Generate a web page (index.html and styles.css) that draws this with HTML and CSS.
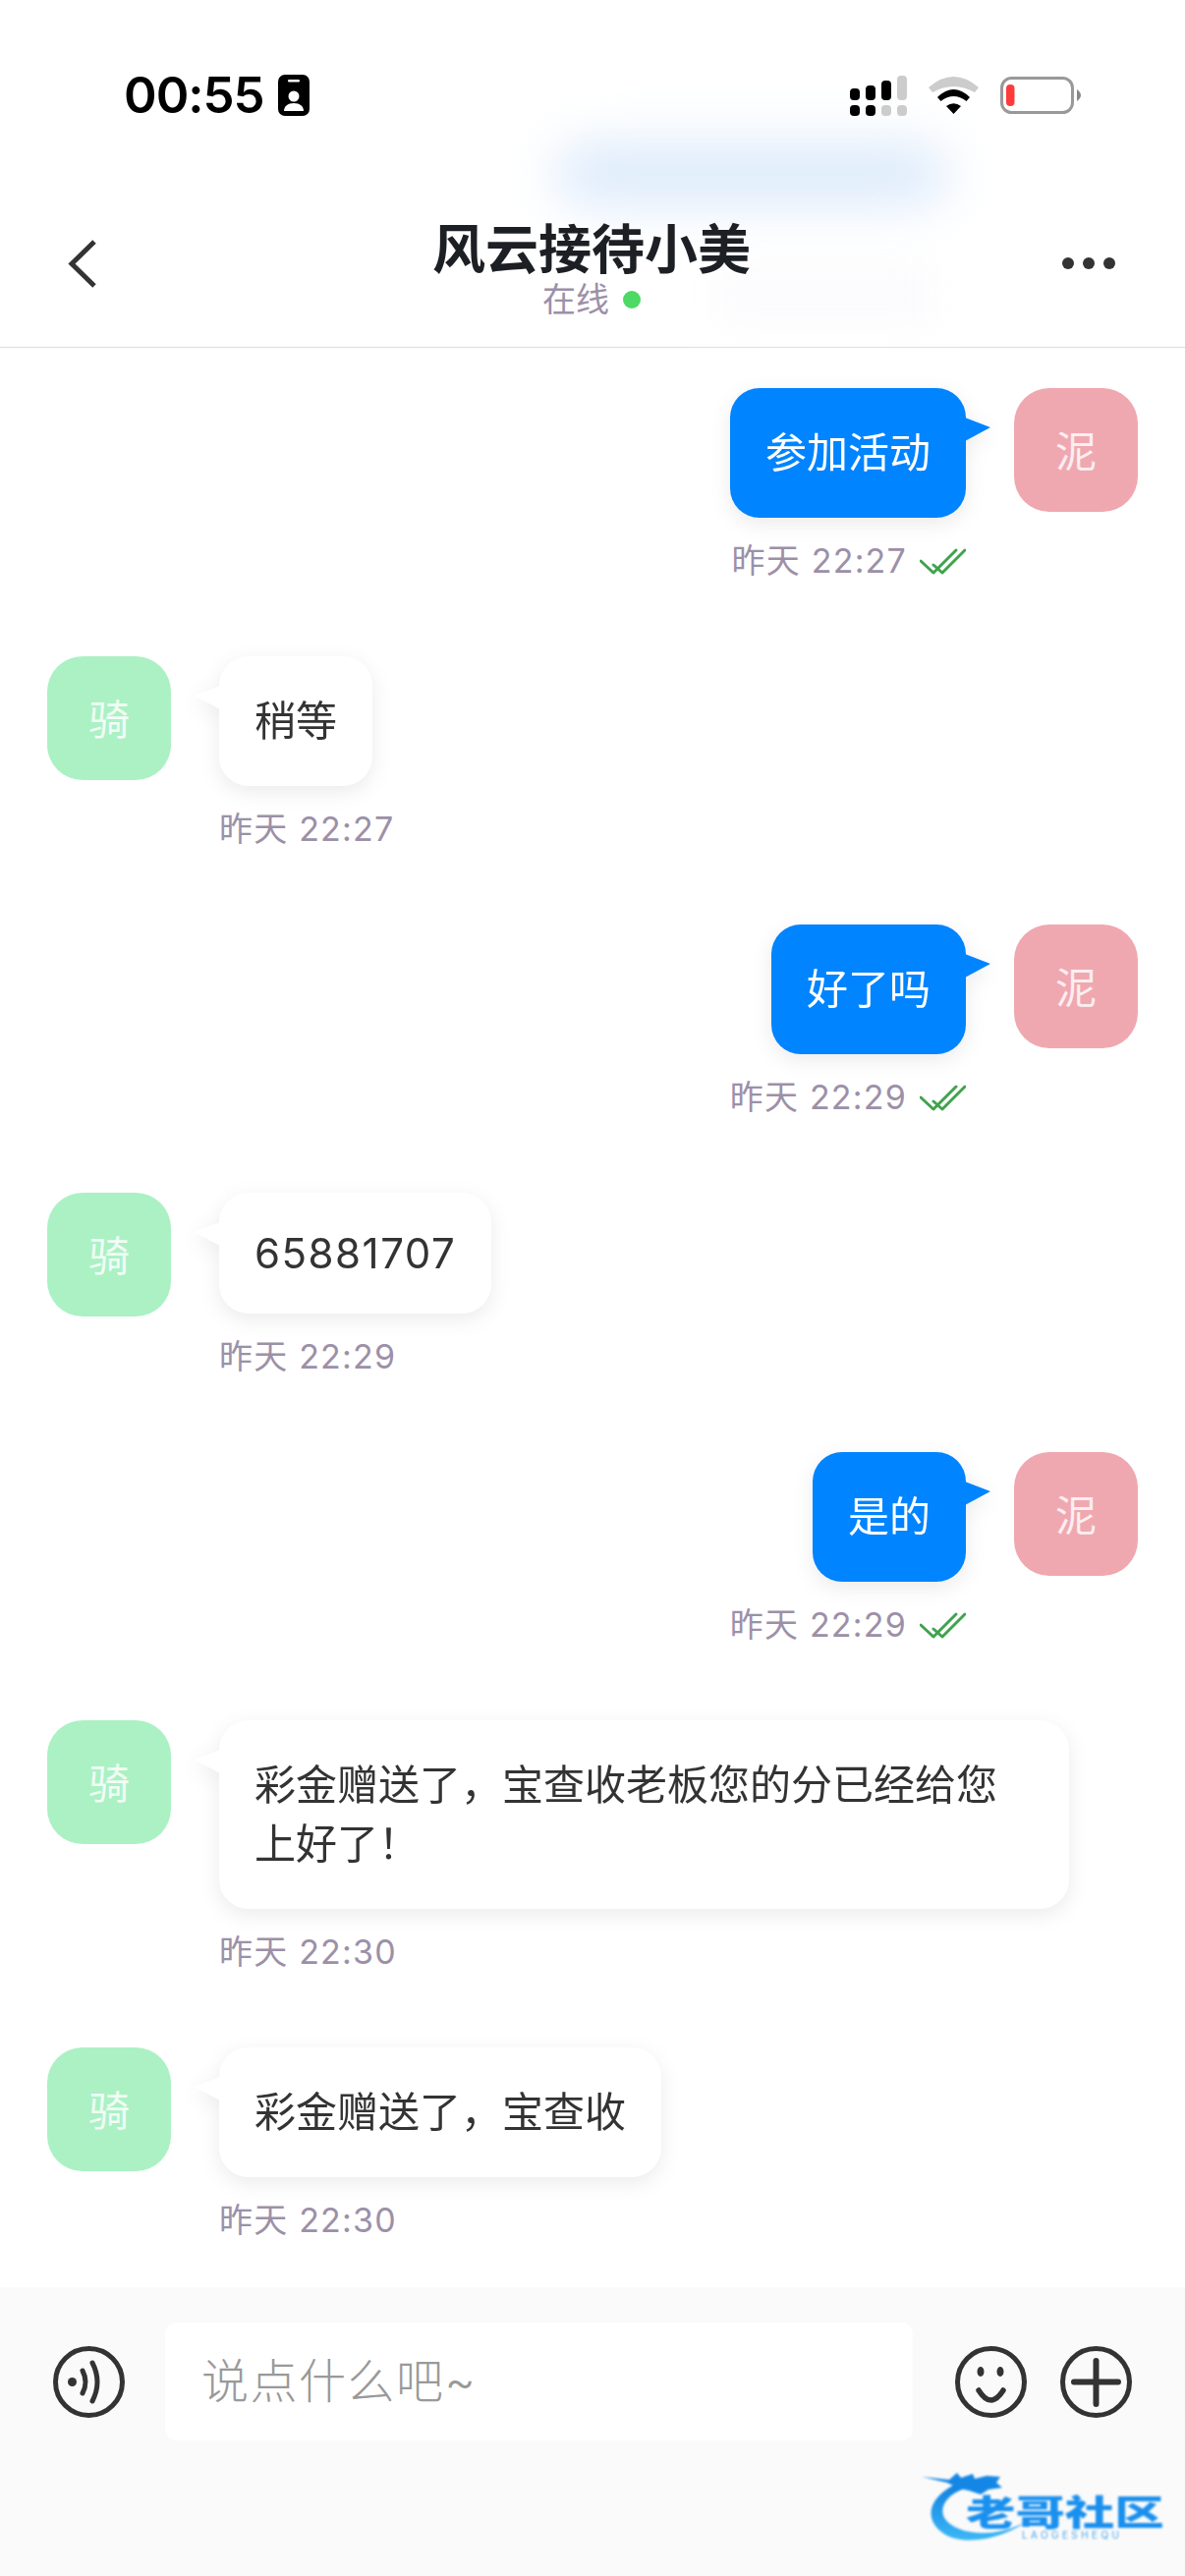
FILE: index.html
```html
<!DOCTYPE html>
<html lang="zh-CN">
<head>
  <meta charset="UTF-8" />
  <title>风云接待小美</title>
  <link rel="stylesheet" href="styles.css">
</head>
<body>
  <div class="phone">
    <header class="top">
      <div class="blob"></div>
      <div class="blob-faint"></div>

      <div class="status-bar">
        <div class="status-left">
          <span class="clock">00:55</span>
          <svg class="badge" width="32" height="42" viewBox="0 0 32 42">
            <rect width="32" height="42" rx="7" fill="#000"/>
            <rect x="10" y="5" width="12" height="2.5" rx="1.2" fill="#fff"/>
            <circle cx="16" cy="22" r="5.5" fill="#fff"/>
            <path d="M6 37c0-5 4-8 10-8s10 3 10 8z" fill="#fff"/>
          </svg>
        </div>
        <div class="status-right">
          <svg width="58" height="41" viewBox="0 0 58 41">
            <rect x="0" y="13" width="10" height="12" rx="4"/>
            <rect x="16" y="10" width="10" height="15" rx="4"/>
            <rect x="32" y="5" width="10" height="20" rx="4"/>
            <rect x="48" y="0" width="10" height="25" rx="4" fill="#ccc"/>
            <rect x="0" y="30" width="10" height="11" rx="4"/>
            <rect x="16" y="30" width="10" height="11" rx="4"/>
            <rect x="32" y="30" width="10" height="11" rx="4" fill="#ccc"/>
            <rect x="48" y="30" width="10" height="11" rx="4" fill="#ccc"/>
          </svg>
          <svg width="51" height="38" viewBox="0 0 51 38">
            <path d="M0 11Q25.5-11 51 11L47 16Q25.5 4 4 16Z" fill="#ccc"/>
            <path d="M9 21Q25.5 5 42 21L38.5 25Q25.5 15 12.5 25Z"/>
            <path d="M18 30Q25.5 24.5 33 30L25.5 38Z"/>
          </svg>
          <svg width="82" height="38" viewBox="0 0 82 38">
            <rect x="1.5" y="1.5" width="72" height="35" rx="10" fill="none" stroke="#999" stroke-width="3"/>
            <rect x="6" y="8" width="8.5" height="22" rx="4" fill="#ff3b3b"/>
            <path d="M78 13Q82 16 82 19T78 25Z" fill="#888"/>
          </svg>
        </div>
      </div>

      <div class="nav">
        <svg class="nav-back" width="29" height="49" viewBox="0 0 29 49">
          <polyline points="27,2 4,24.5 27,47" fill="none" stroke="#333" stroke-width="5"/>
        </svg>
        <div class="nav-title">
          <h1>风云接待小美</h1>
          <div class="presence">在线<span class="presence-dot"></span></div>
        </div>
        <div class="nav-more"><span></span><span></span><span></span></div>
      </div>
    </header>

    <main class="chat">
      <div class="msg mine">
        <div class="avatar pink">泥</div>
        <div class="msg-body">
          <div class="bubble">参加活动</div>
          <div class="meta">昨天 22:27
            <svg width="47" height="27" viewBox="0 0 47 27"><path d="M1 13L14 25L37 2M14 17L23 25L46 2" fill="none" stroke="#3fa34d" stroke-width="3" stroke-linecap="round" stroke-linejoin="round"/></svg>
          </div>
        </div>
      </div>

      <div class="msg">
        <div class="avatar green">骑</div>
        <div class="msg-body">
          <div class="bubble">稍等</div>
          <div class="meta">昨天 22:27</div>
        </div>
      </div>

      <div class="msg mine">
        <div class="avatar pink">泥</div>
        <div class="msg-body">
          <div class="bubble">好了吗</div>
          <div class="meta">昨天 22:29
            <svg width="47" height="27" viewBox="0 0 47 27"><path d="M1 13L14 25L37 2M14 17L23 25L46 2" fill="none" stroke="#3fa34d" stroke-width="3" stroke-linecap="round" stroke-linejoin="round"/></svg>
          </div>
        </div>
      </div>

      <div class="msg">
        <div class="avatar green">骑</div>
        <div class="msg-body">
          <div class="bubble digits">65881707</div>
          <div class="meta">昨天 22:29</div>
        </div>
      </div>

      <div class="msg mine">
        <div class="avatar pink">泥</div>
        <div class="msg-body">
          <div class="bubble">是的</div>
          <div class="meta">昨天 22:29
            <svg width="47" height="27" viewBox="0 0 47 27"><path d="M1 13L14 25L37 2M14 17L23 25L46 2" fill="none" stroke="#3fa34d" stroke-width="3" stroke-linecap="round" stroke-linejoin="round"/></svg>
          </div>
        </div>
      </div>

      <div class="msg">
        <div class="avatar green">骑</div>
        <div class="msg-body">
          <div class="bubble">彩金赠送了，宝查收老板您的分已经给您上好了！</div>
          <div class="meta">昨天 22:30</div>
        </div>
      </div>

      <div class="msg">
        <div class="avatar green">骑</div>
        <div class="msg-body">
          <div class="bubble">彩金赠送了，宝查收</div>
          <div class="meta">昨天 22:30</div>
        </div>
      </div>
    </main>

    <footer class="composer">
      <div class="composer-row">
        <svg class="composer-icon" width="73" height="73" viewBox="0 0 73 73">
          <circle cx="36.5" cy="36.5" r="34" fill="none" stroke="#333" stroke-width="5"/>
          <circle cx="19.5" cy="36.5" r="4.5" fill="#333"/>
          <path d="M30 25Q36 36.5 30 48M40 17Q50 36.5 40 56" fill="none" stroke="#333" stroke-width="5" stroke-linecap="round"/>
        </svg>
        <div class="composer-input">说点什么吧~</div>
        <svg class="composer-icon" width="73" height="73" viewBox="0 0 73 73">
          <circle cx="36.5" cy="36.5" r="34" fill="none" stroke="#333" stroke-width="5"/>
          <ellipse cx="26" cy="26" rx="3.5" ry="5" fill="#333"/>
          <ellipse cx="46" cy="26" rx="3.5" ry="5" fill="#333"/>
          <path d="M24 45Q36.5 65 49 45" fill="none" stroke="#333" stroke-width="5.5" stroke-linecap="round"/>
        </svg>
        <svg class="composer-icon" width="73" height="73" viewBox="0 0 73 73">
          <circle cx="36.5" cy="36.5" r="34" fill="none" stroke="#333" stroke-width="5"/>
          <path d="M14 36.5H59M36.5 15V59" fill="none" stroke="#333" stroke-width="6" stroke-linecap="round"/>
        </svg>
      </div>

      <div class="watermark">
        <svg class="watermark-dragon" width="110" height="75" viewBox="0 0 110 75">
          <defs>
            <linearGradient id="swoosh" x1="0" y1="0" x2="0" y2="1">
              <stop offset="0" stop-color="#0f7fe0"/>
              <stop offset="1" stop-color="#3db8f5"/>
            </linearGradient>
          </defs>
          <path d="M38 12C10 24 0 46 20 62C36 76 76 73 106 52C80 66 46 67 29 54C13 42 24 24 44 18Z" fill="url(#swoosh)"/>
          <path d="M0 6L28 9L36 2L40 7L52 3L54 8L66 5L80 6L76 12L82 17L68 19L60 24L48 20L38 18L26 12Z" fill="#1487e6"/>
        </svg>
        <div class="watermark-name">老哥社区</div>
        <div class="watermark-sub">LAOGESHEQU</div>
      </div>
    </footer>
  </div>
</body>
</html>
```

FILE: styles.css
```css
* {
  box-sizing: border-box;
}

body {
  margin: 0;
  background: #fff;
  color: #333;
  font-family: Inter, "Noto Sans CJK SC", sans-serif;
}

.phone {
  width: 1206px;
  height: 2622px;
  display: flex;
  flex-direction: column;
  overflow: hidden;
}

/* header */
.top {
  position: relative;
  height: 354px;
  border-bottom: 1px solid #dedede;
  overflow: hidden;
}

.blob {
  position: absolute;
  left: 565px;
  top: 146px;
  width: 400px;
  height: 62px;
  background: #dceafb;
  border-radius: 30px;
  filter: blur(26px);
}

.blob-faint {
  position: absolute;
  left: 730px;
  top: 270px;
  width: 220px;
  height: 60px;
  background: #fbfbfd;
  filter: blur(18px);
}

.status-bar {
  position: relative;
  display: flex;
  justify-content: space-between;
  align-items: center;
  height: 42px;
  margin-top: 76px;
  padding: 0 106px 0 126px;
}

.status-left {
  display: flex;
  align-items: center;
  gap: 14px;
}

.clock {
  color: #000;
  font-size: 51px;
  font-weight: 600;
  letter-spacing: -1px;
  line-height: 42px;
}

.badge {
  display: block;
}

.status-right {
  display: flex;
  align-items: center;
  gap: 22px;
}

.nav {
  position: relative;
  display: grid;
  grid-template-columns: 1fr auto 1fr;
  align-items: center;
  margin-top: 106px;
  padding: 0 71px 0 69px;
}

.nav-back {
  display: block;
  margin-bottom: 12px;
}

.nav-title {
  text-align: center;
}

.nav-title h1 {
  margin: 0;
  color: #1c1f23;
  font-size: 54px;
  font-weight: 700;
  line-height: 62px;
}

.presence {
  display: flex;
  justify-content: center;
  align-items: center;
  gap: 14px;
  color: #9c90a8;
  font-size: 34px;
  line-height: 38px;
}

.presence-dot {
  width: 18px;
  height: 18px;
  border-radius: 50%;
  background: #4cd964;
}

.nav-more {
  display: flex;
  justify-content: flex-end;
  gap: 9px;
  margin-bottom: 12px;
}

.nav-more span {
  width: 12px;
  height: 12px;
  border-radius: 50%;
  background: #333;
}

/* messages */
.chat {
  flex: 1;
  padding: 41px 48px 0;
  overflow: hidden;
}

.msg {
  display: flex;
  align-items: flex-start;
  gap: 49px;
  margin-bottom: 75px;
}

.msg.mine {
  flex-direction: row-reverse;
}

.avatar {
  flex: none;
  display: flex;
  justify-content: center;
  align-items: center;
  width: 126px;
  height: 126px;
  padding-bottom: 3px;
  border-radius: 36px;
  color: #fff;
  font-size: 42px;
}

.avatar.pink {
  background: #f0a8b0;
  color: #fbeef0;
}

.avatar.green {
  background: #abf1c4;
  color: #f1fdf5;
}

.msg-body {
  display: flex;
  flex-direction: column;
  align-items: flex-start;
}

.mine .msg-body {
  align-items: flex-end;
}

.bubble {
  position: relative;
  max-width: 865px;
  padding: 36px;
  border-radius: 30px;
  background: #fff;
  filter: drop-shadow(0 6px 10px rgba(0, 0, 0, 0.08));
  color: #333;
  font-size: 42px;
  line-height: 60px;
}

.bubble.digits {
  letter-spacing: 1.5px;
  line-height: 51px;
}

.bubble::after {
  content: "";
  position: absolute;
  left: -25px;
  top: 30px;
  width: 26px;
  height: 24px;
  background: #fff;
  clip-path: polygon(0 42%, 100% 0, 100% 100%);
}

.mine .bubble {
  background: #0084ff;
  color: #fff;
}

.mine .bubble::after {
  left: auto;
  right: -25px;
  background: #0084ff;
  clip-path: polygon(0 0, 100% 42%, 0 100%);
}

.meta {
  display: flex;
  align-items: center;
  gap: 13px;
  margin-top: 22px;
  color: #9c90a8;
  font-size: 34px;
  letter-spacing: 1.2px;
  line-height: 44px;
  white-space: nowrap;
}

/* bottom bar */
.composer {
  position: relative;
  height: 294px;
  padding: 36px 54px 0;
  background: #fafafa;
}

.composer-row {
  display: flex;
  align-items: center;
  height: 120px;
}

.composer-icon {
  flex: none;
  display: block;
}

.composer-input {
  width: 763px;
  height: 120px;
  margin: 0 43px 0 41px;
  padding: 0 37px;
  border-radius: 12px;
  background: #fff;
  color: #999;
  font-size: 48px;
  font-weight: 300;
  letter-spacing: 1.5px;
  line-height: 120px;
}

.composer-icon:last-child {
  margin-left: 34px;
}

.watermark {
  position: absolute;
  left: 938px;
  top: 187px;
  width: 250px;
  height: 75px;
  filter: blur(0.8px);
}

.watermark-dragon {
  position: absolute;
  left: 0;
  top: 0;
}

.watermark-name {
  position: absolute;
  left: 45px;
  top: 22px;
  color: #1a90ee;
  font-family: "Noto Sans CJK SC", sans-serif;
  font-size: 36px;
  font-weight: 900;
  line-height: 36px;
  white-space: nowrap;
  transform: scaleX(1.4);
  transform-origin: left center;
}

.watermark-sub {
  position: absolute;
  left: 102px;
  top: 59px;
  color: #4aa5ea;
  font-size: 10px;
  letter-spacing: 3.4px;
  line-height: 12px;
}
```
